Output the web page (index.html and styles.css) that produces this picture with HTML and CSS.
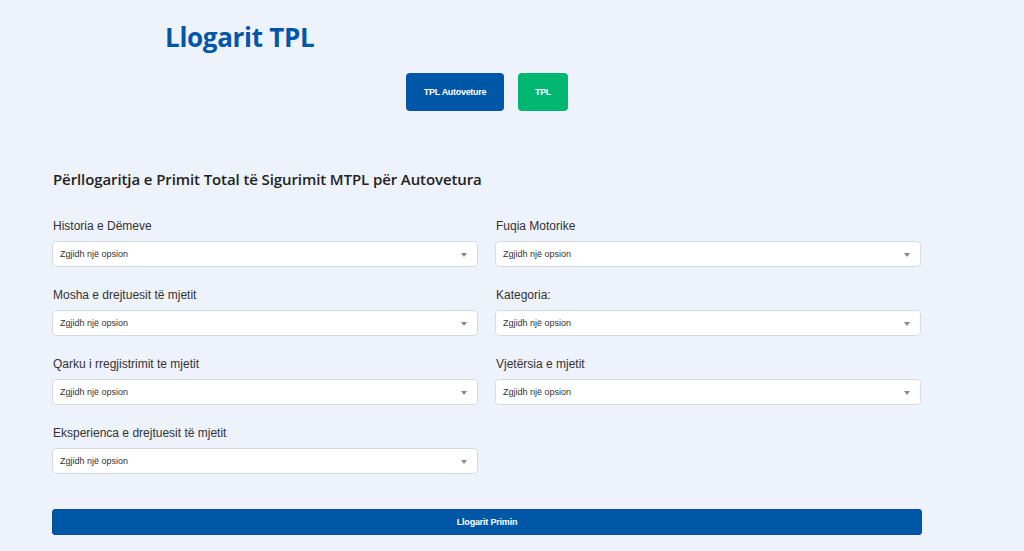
FILE: index.html
```html
<!DOCTYPE html>
<html lang="sq">
<head>
<meta charset="utf-8">
<title>Llogarit TPL</title>
<link rel="stylesheet" href="styles.css">
</head>
<body>
<div class="page">
  <header class="header">
    <h1 class="brand">Llogarit TPL</h1>
  </header>
  <nav class="tabs">
    <button class="tab tab-blue">TPL Autoveture</button>
    <button class="tab tab-green">TPL</button>
  </nav>
  <h2 class="heading">Përllogaritja e Primit Total të Sigurimit MTPL për Autovetura</h2>
  <form class="form">
    <div class="field">
      <label class="label">Historia e Dëmeve</label>
      <div class="select"><span>Zgjidh një opsion</span><i class="caret"></i></div>
    </div>
    <div class="field">
      <label class="label">Fuqia Motorike</label>
      <div class="select"><span>Zgjidh një opsion</span><i class="caret"></i></div>
    </div>
    <div class="field">
      <label class="label">Mosha e drejtuesit të mjetit</label>
      <div class="select"><span>Zgjidh një opsion</span><i class="caret"></i></div>
    </div>
    <div class="field">
      <label class="label">Kategoria:</label>
      <div class="select"><span>Zgjidh një opsion</span><i class="caret"></i></div>
    </div>
    <div class="field">
      <label class="label">Qarku i rregjistrimit te mjetit</label>
      <div class="select"><span>Zgjidh një opsion</span><i class="caret"></i></div>
    </div>
    <div class="field">
      <label class="label">Vjetërsia e mjetit</label>
      <div class="select"><span>Zgjidh një opsion</span><i class="caret"></i></div>
    </div>
    <div class="field">
      <label class="label">Eksperienca e drejtuesit të mjetit</label>
      <div class="select"><span>Zgjidh një opsion</span><i class="caret"></i></div>
    </div>
  </form>
  <button class="submit">Llogarit Primin</button>
</div>
</body>
</html>
```
FILE: styles.css
```css
* { box-sizing: border-box; }
html, body { margin: 0; padding: 0; }
body {
  background: #eef2fa;
  font-family: "Liberation Sans", Arial, sans-serif;
  color: #333;
  height: 551px;
  overflow: hidden;
}
.page {
  width: 870px;
  margin-left: 52px;
}
.header {
  padding: 19px 0 0 113px;
}
.brand {
  margin: 0;
  font-family: "Open Sans", "Noto Sans", sans-serif;
  font-weight: 700;
  font-size: 26px;
  line-height: 36px;
  color: #0057a8;
  letter-spacing: -0.3px;
}
.tabs {
  display: flex;
  justify-content: center;
  gap: 14px;
  margin-top: 18px;
}
.tab {
  border: none;
  border-radius: 4px;
  height: 38px;
  color: #fff;
  font-family: "Liberation Sans", Arial, sans-serif;
  font-weight: 700;
  font-size: 9px;
  letter-spacing: -0.3px;
  padding: 0;
}
.tab-blue { background: #0057a8; width: 98px; }
.tab-green { background: #00b772; width: 50px; }
.heading {
  margin: 57px 0 0 1px;
  font-family: "Open Sans", "Noto Sans", sans-serif;
  font-weight: 600;
  font-size: 15px;
  line-height: 22px;
  color: #222;
  letter-spacing: -0.1px;
}
.form {
  display: grid;
  grid-template-columns: 426px 426px;
  column-gap: 17px;
  row-gap: 21px;
  margin-top: 29px;
}
.label {
  display: block;
  font-size: 12px;
  line-height: 15px;
  color: #333;
  margin-left: 1px;
  margin-bottom: 7px;
}
.select {
  height: 26px;
  background: #fff;
  border: 1px solid #d6dbe3;
  border-radius: 4px;
  display: flex;
  align-items: center;
  justify-content: space-between;
  padding: 0 10px 0 7px;
  font-size: 9px;
  color: #333;
}
.caret {
  width: 0;
  height: 0;
  border-left: 3.5px solid transparent;
  border-right: 3.5px solid transparent;
  border-top: 4px solid #888;
  margin-top: 1px;
}
.submit {
  display: block;
  width: 870px;
  height: 26px;
  margin-top: 35px;
  background: #0057a8;
  border: 1px solid #0a4f94;
  border-radius: 3px;
  color: #fff;
  font-family: "Liberation Sans", Arial, sans-serif;
  font-weight: 700;
  font-size: 9px;
  letter-spacing: -0.2px;
}
```
